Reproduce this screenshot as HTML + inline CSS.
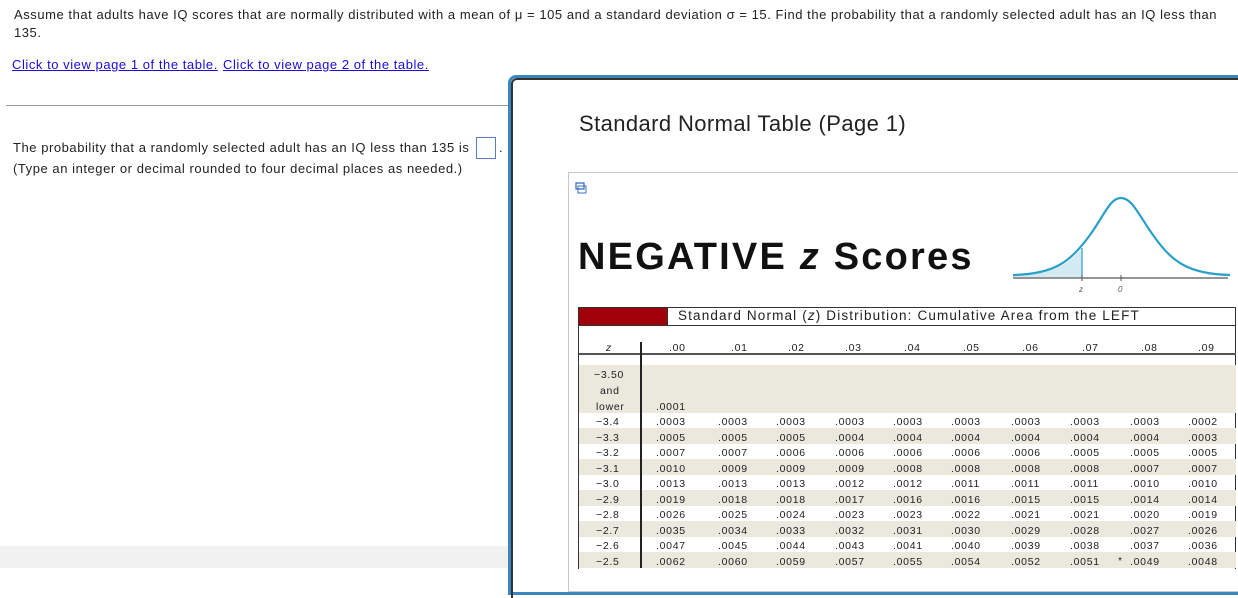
<!DOCTYPE html>
<html><head><style>
*{margin:0;padding:0;box-sizing:border-box}
body{width:1238px;height:568px;overflow:hidden;background:#fff;font-family:"Liberation Sans",Arial,sans-serif;position:relative;color:#222}
.a{position:absolute;white-space:nowrap}
.t{font-size:13px;letter-spacing:0.55px}
.lk{color:#1a0dde;text-decoration:underline;font-size:13px;letter-spacing:0.55px}
.n{position:absolute;font-size:10.5px;color:#222;white-space:nowrap;letter-spacing:0.7px}
</style></head><body>
<div class="a t" style="left:14px;top:7px">Assume that adults have IQ scores that are normally distributed with a mean of μ = 105 and a standard deviation σ = 15. Find the probability that a randomly selected adult has an IQ less than</div>
<div class="a t" style="left:14px;top:25px">135.</div>
<div class="a lk" style="left:12px;top:57px">Click to view page 1 of the table.</div>
<div class="a lk" style="left:223px;top:57px">Click to view page 2 of the table.</div>
<div class="a" style="left:6px;top:105px;width:504px;height:1px;background:#999"></div>
<div class="a t" style="left:13px;top:140px">The probability that a randomly selected adult has an IQ less than 135 is</div>
<div class="a" style="left:476px;top:137px;width:20px;height:22px;border:1px solid #5a7fc8"></div>
<div class="a t" style="left:499px;top:140px">.</div>
<div class="a t" style="left:13px;top:161px">(Type an integer or decimal rounded to four decimal places as needed.)</div>
<div class="a" style="left:0;top:546px;width:509px;height:22px;background:#f1f1f1"></div>

<div class="a" style="left:508px;top:75px;width:740px;height:520px;border:3px solid #3a86bd;border-radius:8px 0 0 0"></div>
<div class="a" style="left:511px;top:78px;width:740px;height:520px;border-left:2px solid #333;border-top:2px solid #333;border-radius:6px 0 0 0"></div>
<div class="a" style="left:579px;top:111px;font-size:22px;color:#222;letter-spacing:0.4px">Standard Normal Table (Page 1)</div>
<div class="a" style="left:568px;top:172px;width:680px;height:420px;border:1px solid #c8c8c8"></div>
<svg class="a" style="left:575px;top:182px" width="12" height="12"><rect x="1" y="1" width="8" height="6" fill="none" stroke="#3c6fbf" stroke-width="1.3"/><rect x="3" y="4" width="8" height="7" fill="none" stroke="#3c6fbf" stroke-width="1"/></svg>
<div class="a" style="left:578px;top:236px;font-size:38px;font-weight:bold;color:#111;letter-spacing:2.2px">NEGATIVE <i>z</i> Scores</div>
<svg class="a" style="left:1010px;top:190px" width="228" height="110">
<path d="M3,85 C40,84 55,78 72,58 L72,87 L3,87Z" fill="#d4ebf3"/>
<line x1="72" y1="58" x2="72" y2="87" stroke="#2aa0c8" stroke-width="1.2"/>
<path d="M3,85 C45,84 60,72 80,45 C95,24 100,8 111,8 C122,8 128,24 143,45 C162,72 178,84 220,85" fill="none" stroke="#2aa0c8" stroke-width="2.2"/>
<line x1="3" y1="88" x2="218" y2="88" stroke="#555" stroke-width="1.3"/>
<line x1="72" y1="85" x2="72" y2="91" stroke="#555"/><line x1="111" y1="85" x2="111" y2="91" stroke="#555"/>
<text x="69" y="102" font-size="8" font-style="italic" fill="#555">z</text><text x="108" y="102" font-size="8" font-style="italic" fill="#555">0</text>
</svg>
<div class="a" style="left:578px;top:307px;width:658px;height:262px;border:1.5px solid #333;border-bottom:none"></div>
<div class="a" style="left:579px;top:308px;width:88px;height:17px;background:#a0000a"></div>
<div class="a" style="left:667px;top:308px;width:1px;height:17px;background:#333"></div>
<div class="a" style="left:678px;top:308px;font-size:13.5px;color:#222;letter-spacing:1.15px">Standard Normal (<i>z</i>) Distribution: Cumulative Area from the LEFT</div>
<div class="a" style="left:579px;top:325px;width:657px;height:1px;background:#333"></div>
<div class="a" style="left:579px;top:353px;width:657px;height:1.5px;background:#555"></div>
<div class="a" style="left:640px;top:342px;width:1.5px;height:226px;background:#222"></div>
<div class="n" style="left:606px;top:342px;font-style:italic">z</div>
<div class="a" style="left:579px;top:365px;width:657px;height:48px;background:#ebe8de"></div>
<div class="a" style="left:579px;top:428px;width:657px;height:16px;background:#ebe8de"></div>
<div class="a" style="left:579px;top:459px;width:657px;height:16px;background:#ebe8de"></div>
<div class="a" style="left:579px;top:490px;width:657px;height:16px;background:#ebe8de"></div>
<div class="a" style="left:579px;top:521px;width:657px;height:16px;background:#ebe8de"></div>
<div class="a" style="left:579px;top:552px;width:657px;height:16px;background:#ebe8de"></div>
<div class="a" style="left:640px;top:365px;width:1.5px;height:203px;background:#222"></div>
<div id="hd"></div>
<script>
var cx=[656,718,776,835,893,951,1011,1070,1130,1188];
var hx=[669,731,788,845,904,963,1022,1082,1141,1198];
var h=['.00','.01','.02','.03','.04','.05','.06','.07','.08','.09'];
var s='';
for(var i=0;i<10;i++)s+='<div class="n" style="left:'+hx[i]+'px;top:342px">'+h[i]+'</div>';
s+='<div class="n" style="left:594px;top:369px">−3.50</div><div class="n" style="left:600px;top:385px">and</div><div class="n" style="left:596px;top:401px">lower</div><div class="n" style="left:656px;top:401px">.0001</div>';
var R=[['−3.4','.0003 .0003 .0003 .0003 .0003 .0003 .0003 .0003 .0003 .0002'],
['−3.3','.0005 .0005 .0005 .0004 .0004 .0004 .0004 .0004 .0004 .0003'],
['−3.2','.0007 .0007 .0006 .0006 .0006 .0006 .0006 .0005 .0005 .0005'],
['−3.1','.0010 .0009 .0009 .0009 .0008 .0008 .0008 .0008 .0007 .0007'],
['−3.0','.0013 .0013 .0013 .0012 .0012 .0011 .0011 .0011 .0010 .0010'],
['−2.9','.0019 .0018 .0018 .0017 .0016 .0016 .0015 .0015 .0014 .0014'],
['−2.8','.0026 .0025 .0024 .0023 .0023 .0022 .0021 .0021 .0020 .0019'],
['−2.7','.0035 .0034 .0033 .0032 .0031 .0030 .0029 .0028 .0027 .0026'],
['−2.6','.0047 .0045 .0044 .0043 .0041 .0040 .0039 .0038 .0037 .0036'],
['−2.5','.0062 .0060 .0059 .0057 .0055 .0054 .0052 .0051 .0049 .0048']];
for(var r=0;r<R.length;r++){var y=416+r*15.5;s+='<div class="n" style="left:596px;top:'+y+'px">'+R[r][0]+'</div>';var v=R[r][1].split(' ');for(var i=0;i<10;i++)s+='<div class="n" style="left:'+cx[i]+'px;top:'+y+'px">'+v[i]+'</div>';}
s+='<div class="n" style="left:1118px;top:555px">*</div>';
document.getElementById('hd').outerHTML=s;
</script>
</body></html>
